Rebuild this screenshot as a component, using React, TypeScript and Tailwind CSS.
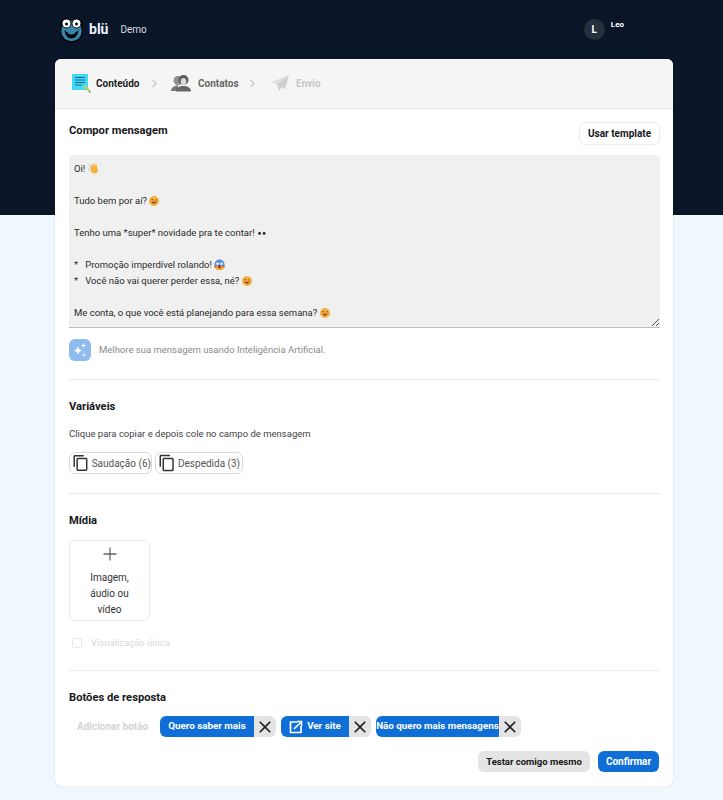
import React from 'react';
import { ChevronRight } from 'lucide-react';

function Face({ kind }: { kind: 'wink' | 'smile' | 'scream' }) {
    if (kind === 'scream') {
        return (
            <svg width="11" height="11" viewBox="0 0 14 14" className="inline-block align-[-2px]">
                <circle cx="7" cy="7" r="6.5" fill="#5b8fd9" />
                <path d="M1 9a6 6 0 0 0 12 0z" fill="#f2a93b" />
                <circle cx="4.5" cy="6" r="1.6" fill="#fff" />
                <circle cx="9.5" cy="6" r="1.6" fill="#fff" />
                <ellipse cx="7" cy="10" rx="1.6" ry="2.2" fill="#7a2d1e" />
                <circle cx="1.7" cy="9.5" r="1.5" fill="#e8604c" />
                <circle cx="12.3" cy="9.5" r="1.5" fill="#e8604c" />
            </svg>
        );
    }
    return (
        <svg width="10" height="10" viewBox="0 0 13 13" className="inline-block align-[-2px]">
            <circle cx="6.5" cy="6.5" r="6.5" fill="#f4b13e" />
            <circle cx="4.2" cy="5" r="1" fill="#6b4312" />
            {kind === 'smile' ? <circle cx="8.8" cy="5" r="1" fill="#6b4312" /> : <path d="M7.6 5.2h2.6" stroke="#6b4312" strokeWidth="1" />}
            <path d="M3.3 7.6a3.3 3.3 0 0 0 6.4 0z" fill="#8a4a1c" />
            <circle cx="2.6" cy="7.4" r="1" fill="#ef8f62" />
            <circle cx="10.4" cy="7.4" r="1" fill="#ef8f62" />
        </svg>
    );
}

function Wave() {
    return (
        <svg width="11" height="11" viewBox="0 0 14 14" className="inline-block align-[-2px]">
            <circle cx="8" cy="9" r="4.5" fill="#f4b13e" />
            <path d="M4.500 7L3 4M6.500 5.500L5.500 2M8.500 5L8 1.500M10.500 6L10.500 3" stroke="#f4b13e" strokeWidth="1.800" strokeLinecap="round" />
            <path d="M1 6.500c0 1.500.5 3 1.500 4M1.500 1.500L.5 3" stroke="#9db4c8" strokeWidth="0.8" fill="none" />
        </svg>
    );
}

function Eyes() {
    return (
        <svg width="10" height="10" viewBox="0 0 13 13" className="inline-block align-[-2px]">
            <ellipse cx="3.6" cy="6.5" rx="2.6" ry="3" fill="#e8e8e8" />
            <ellipse cx="9.4" cy="6.5" rx="2.6" ry="3" fill="#e8e8e8" />
            <circle cx="3.4" cy="7" r="1.8" fill="#222" />
            <circle cx="9.2" cy="7" r="1.8" fill="#222" />
        </svg>
    );
}

function Logo() {
    return (
        <svg width="25" height="26" viewBox="0 0 25 26">
            <path d="M1 8c0-4 2-7 5-7 3 0 5 1 6.500 2 1.500-1 3.500-2 6.500-2 3 0 5 3 5 7v6c0 7-5 12-11.500 12S1 21 1 14z" fill="#04070c" />
            <circle cx="12.500" cy="14" r="10.200" fill="#3a86ab" />
            <path d="M5.500 13c.5 5.500 3.300 8.500 7 8.500s6.500-3 7-8.500c-1.500 2-4 3-7 3s-5.500-1-7-3z" fill="#04070c" />
            <circle cx="12.500" cy="13" r="4.500" fill="#3a86ab" />
            <circle cx="7.500" cy="6.500" r="4.500" fill="#fff" stroke="#04070c" strokeWidth="1" />
            <circle cx="17.500" cy="6.500" r="4.500" fill="#fff" stroke="#04070c" strokeWidth="1" />
            <circle cx="7.500" cy="7" r="1.500" fill="#04070c" />
            <circle cx="17.500" cy="7" r="1.500" fill="#04070c" />
        </svg>
    );
}

function NoteIcon() {
    return (
        <svg width="19" height="20" viewBox="0 0 19 20">
            <rect x="0" y="0" width="16" height="16" fill="#43d8f5" />
            <path d="M3 3.500h10M3 6h10M3 8.500h10M3 11h7" stroke="#1a6f96" strokeWidth="1" />
            <path d="M11 13l2-2 5 5-1.500 1.500z" fill="#bcd24a" />
            <path d="M17 17l1.500 1.500" stroke="#777" strokeWidth="1.200" />
        </svg>
    );
}

function PeopleIcon() {
    return (
        <svg width="20" height="17" viewBox="0 0 20 17">
            <path d="M0 16c0-3 2-4 4-5l3-1v6z" fill="#777" />
            <circle cx="7" cy="5.500" r="4.500" fill="#8f8f8f" />
            <circle cx="12.500" cy="5" r="5" fill="#5a5a5a" />
            <ellipse cx="12.500" cy="6.500" rx="2.800" ry="3.600" fill="#dcdcdc" />
            <path d="M5 16.500c0-3.500 3-5.500 7.500-5.500S20 13 20 16.500z" fill="#666" />
        </svg>
    );
}

function PlaneIcon() {
    return (
        <svg width="17" height="17" viewBox="0 0 17 17">
            <path d="M17 0L0 7l5 2.500z" fill="#dedede" />
            <path d="M17 0L5 9.500 7 16l2.500-3.500L13 14z" fill="#cfcfcf" />
        </svg>
    );
}

function CloseIcon() {
    return (
        <svg width="20" height="20" viewBox="0 0 24 24" fill="#222">
            <path d="M19 6.410 17.590 5 12 10.590 6.410 5 5 6.410 10.590 12 5 17.590 6.410 19 12 13.410 17.590 19 19 17.590 13.410 12z" />
        </svg>
    );
}

function CopyIcon() {
    return (
        <svg width="18" height="18" viewBox="0 0 24 24" fill="#333">
            <path d="M16 1H4c-1.100 0-2 .9-2 2v14h2V3h12V1zm3 4H8c-1.100 0-2 .9-2 2v14c0 1.100.9 2 2 2h11c1.100 0 2-.9 2-2V7c0-1.100-.9-2-2-2zm0 16H8V7h11v14z" />
        </svg>
    );
}

function SectionTitle({ children }: { children: React.ReactNode }) {
    return <h2 className="h-5 text-[11.2px] leading-[22px] font-bold text-[#16181b]">{children}</h2>;
}

function VariableChip({ label, width }: { label: string; width: string }) {
    return (
        <button className={`h-[22px] flex items-center gap-[2px] pl-[2px] rounded-md border border-[#d9d9d9] bg-white text-[10px] text-[#555] whitespace-nowrap ${width}`}>
            <CopyIcon />
            {label}
        </button>
    );
}

function ReplyButton({ label, icon, blue }: { label: string; icon?: boolean; blue: string }) {
    return (
        <div className="flex h-[21px]">
            <div className={`flex items-center justify-center gap-[4px] h-full bg-[#0f6fd6] rounded-l-md text-white text-[9.8px] font-bold whitespace-nowrap ${blue}`}>
                {icon && (
                    <svg width="14" height="14" viewBox="0 0 14 14" fill="none">
                        <path d="M8 2H1.500v10.500H12V6" stroke="#fff" strokeWidth="1.700" />
                        <path d="M5 9L11.500 2.500M8 1.500h4.500V6" stroke="#fff" strokeWidth="1.600" />
                    </svg>
                )}
                {label}
            </div>
            <div className="w-[22px] h-full bg-[#e4e4e4] rounded-r-md flex items-center justify-center">
                <CloseIcon />
            </div>
        </div>
    );
}

export default function App() {
    return (
        <div className="min-h-[800px] font-['Roboto',sans-serif] bg-[linear-gradient(#0a1628_215px,#eff8fd_215px)] overflow-hidden">
            {/* Top bar */}
            <header className="h-[59px] pl-[59px] pr-[99px] flex justify-between">
                <div className="flex items-center">
                    <Logo />
                    <span className="ml-[5px] text-[14px] font-bold text-[#eef2ff]">blü</span>
                    <span className="ml-[12px] text-[10px] text-[#d5dbe3]">Demo</span>
                </div>
                <div className="flex pt-[19px] gap-[6px]">
                    <div className="w-[21px] h-[21px] rounded-full bg-[#25303f] flex items-center justify-center text-[10px] font-bold text-white">L</div>
                    <span className="text-[8px] leading-[10px] pt-[1px] font-bold text-white">Leo</span>
                </div>
            </header>

            {/* Card */}
            <main className="mx-[55px] w-[618px] h-[727px] bg-white rounded-md shadow-[0_0_1px_rgba(0,0,0,0.3)]">
                <nav className="h-[50px] bg-[#f5f5f5] rounded-t-md border-b border-[#e8e8e8] flex items-center pl-[17px] text-[10px] font-bold">
                    <NoteIcon />
                    <span className="ml-[5px] w-[43px] text-[#222]">Conteúdo</span>
                    <ChevronRight className="ml-[9px] w-[13px] h-[13px] text-[#c4c4c4]" />
                    <span className="ml-[10px] flex"><PeopleIcon /></span>
                    <span className="ml-[7px] w-[39px] text-[#666]">Contatos</span>
                    <ChevronRight className="ml-[9px] w-[13px] h-[13px] text-[#c4c4c4]" />
                    <span className="ml-[13px] flex"><PlaneIcon /></span>
                    <span className="ml-[7px] text-[#c8c8c8]">Envio</span>
                </nav>

                <div className="pl-[14px] pr-[13px]">
                    {/* Compor mensagem */}
                    <section className="pt-[11px] pb-[18px] border-b border-[#ececec]">
                        <div className="flex justify-between h-[35px]">
                            <SectionTitle>Compor mensagem</SectionTitle>
                            <button className="mt-[2px] h-[23px] w-[81px] rounded-md border border-[#ececec] text-[10px] font-bold text-[#16181b]">Usar template</button>
                        </div>
                        <div className="h-[173px] bg-[#f0f0f0] border-b border-[#bdbdbd] rounded-t-sm px-[5px] pt-[6px] text-[9.5px] leading-4 text-[#2a2a2a] relative">
                            <p>Oi! <Wave /></p>
                            <p className="mt-4">Tudo bem por aí? <Face kind="wink" /></p>
                            <p className="mt-4">Tenho uma *super* novidade pra te contar! <Eyes /></p>
                            <p className="mt-4 whitespace-pre">*   Promoção imperdível rolando! <Face kind="scream" /></p>
                            <p className="whitespace-pre">*   Você não vai querer perder essa, né? <Face kind="wink" /></p>
                            <p className="mt-4">Me conta, o que você está planejando para essa semana? <Face kind="smile" /></p>
                            <svg width="7" height="7" viewBox="0 0 7 7" className="absolute right-[1px] bottom-[1px]">
                                <path d="M7 0L0 7M7 4L4 7" stroke="#555" strokeWidth="1" />
                            </svg>
                        </div>
                        <div className="mt-[11px] flex items-center gap-[8px]">
                            <div className="w-[22px] h-[22px] rounded-md bg-[#8fbcf0] flex items-center justify-center">
                                <svg width="16" height="16" viewBox="0 0 16 16" fill="#fff">
                                    <path d="M6 4.500l1.200 2.800L10 8.500 7.200 9.700 6 12.500 4.800 9.700 2 8.500l2.800-1.200z" />
                                    <path d="M11.500 1l.7 1.800 1.800.7-1.800.7-.7 1.800-.7-1.800L9 3.500l1.800-.7z" />
                                    <path d="M12 11l.6 1.400 1.400.6-1.400.6L12 15l-.6-1.400L10 13l1.400-.6z" />
                                </svg>
                            </div>
                            <span className="text-[9.5px] text-[#8a8a8a]">Melhore sua mensagem usando Inteligência Artificial.</span>
                        </div>
                    </section>

                    {/* Variáveis */}
                    <section className="pt-[16px] pb-[19px] border-b border-[#ececec]">
                        <SectionTitle>Variáveis</SectionTitle>
                        <p className="mt-[10px] text-[9.5px] leading-4 text-[#444]">Clique para copiar e depois cole no campo de mensagem</p>
                        <div className="mt-[10px] flex gap-[3px]">
                            <VariableChip label="Saudação (6)" width="w-[83px]" />
                            <VariableChip label="Despedida (3)" width="w-[88px]" />
                        </div>
                    </section>

                    {/* Mídia */}
                    <section className="pt-[16px] pb-[20px] border-b border-[#ececec]">
                        <SectionTitle>Mídia</SectionTitle>
                        <button className="mt-[10px] w-[81px] h-[81px] rounded-md border border-[#ececec] flex flex-col items-center text-[10px] leading-4 text-[#333]">
                            <svg width="20" height="20" viewBox="0 0 20 20" className="mt-[3px]" stroke="#666" strokeWidth="1.300">
                                <path d="M10 3.500v13M3.500 10h13" />
                            </svg>
                            <span className="mt-[6px] w-[50px] text-center">Imagem, áudio ou vídeo</span>
                        </button>
                        <label className="mt-[15px] flex items-center gap-[9px] text-[9.5px] text-[#d8d8d8]">
                            <span className="ml-[3px] w-[10px] h-[10px] rounded-[2px] border border-[#e8e8e8]" />
                            Visualização única
                        </label>
                    </section>

                    {/* Botões de resposta */}
                    <section className="pt-[16px]">
                        <SectionTitle>Botões de resposta</SectionTitle>
                        <div className="mt-[9px] flex items-center">
                            <span className="ml-[8px] w-[83px] text-[10px] font-bold text-[#d4d4d4]">Adicionar botão</span>
                            <div className="flex gap-[5px]">
                                <ReplyButton label="Quero saber mais" blue="w-[94px]" />
                                <ReplyButton label="Ver site" icon blue="w-[68px]" />
                                <ReplyButton label="Não quero mais mensagens" blue="w-[123px]" />
                            </div>
                        </div>
                        <div className="mt-[14px] pr-[1px] flex justify-end gap-[8px]">
                            <button className="w-[112px] h-[21px] rounded-md bg-[#e4e4e4] text-[9.5px] font-bold text-[#16181b]">Testar comigo mesmo</button>
                            <button className="w-[61px] h-[21px] rounded-md bg-[#0f6fd6] text-[10px] font-bold text-white">Confirmar</button>
                        </div>
                    </section>
                </div>
            </main>
        </div>
    );
}
